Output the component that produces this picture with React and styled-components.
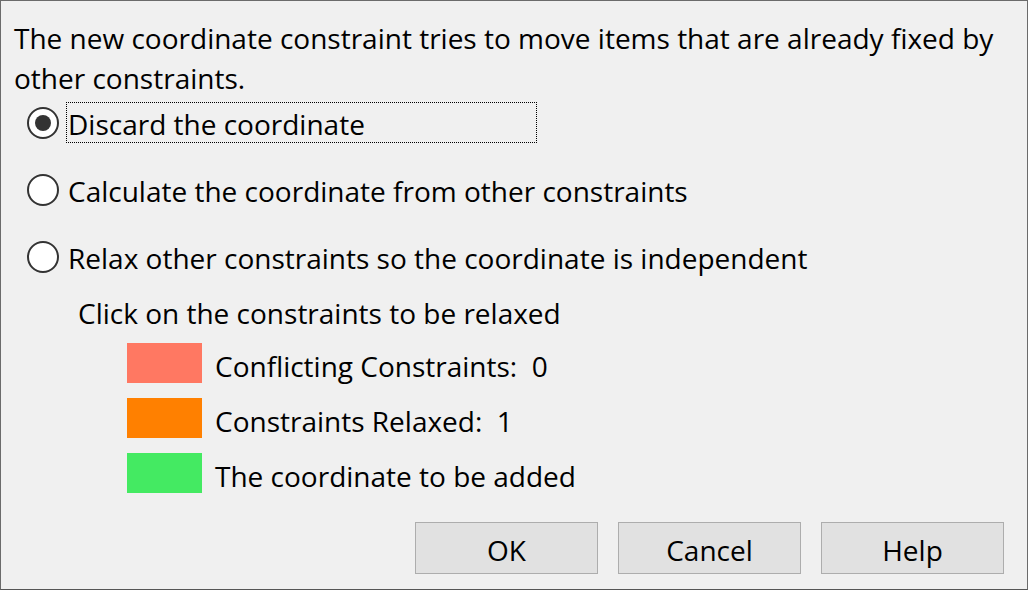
import styled, { createGlobalStyle } from 'styled-components';

const GlobalStyle = createGlobalStyle`
  body {
    margin: 0;
    background: #f0f0f0;
    font-family: "Open Sans", "Noto Sans", sans-serif;
    color: #000;
  }
`;

const Window = styled.div`
  width: 1028px;
  height: 590px;
  box-sizing: border-box;
  border: 1px solid #6b6b6b;
  border-bottom-color: #555;
  background: #f0f0f0;
  display: flex;
  flex-direction: column;
  padding: 17px 23px 15px 13px;
  font-size: 28px;
`;

const Message = styled.p`
  margin: 0;
  line-height: 40px;
  width: 1000px;
`;

const Options = styled.div`
  display: flex;
  flex-direction: column;
  gap: 26px;
  margin-top: 4px;
  padding-left: 13px;
`;

const OptionRow = styled.label`
  display: flex;
  align-items: center;
  height: 41px;
  gap: 7px;
`;

const Radio = styled.span`
  width: 32px;
  height: 32px;
  box-sizing: border-box;
  border-radius: 50%;
  border: 2px solid #333;
  background: #fff;
  display: flex;
  align-items: center;
  justify-content: center;

  &::after {
    content: '';
    width: 16px;
    height: 16px;
    border-radius: 50%;
    background: ${(p) => (p.checked ? '#333' : 'transparent')};
  }
`;

const OptionText = styled.span`
  box-sizing: border-box;
  min-width: 471px;
  height: 41px;
  line-height: 39px;
  padding: 2px 0 0 1px;
  border: 1px dotted ${(p) => (p.focused ? '#000' : 'transparent')};
  white-space: nowrap;
`;

const Hint = styled.div`
  margin: 16px 0 0 64px;
  line-height: 40px;
`;

const Legend = styled.div`
  display: flex;
  flex-direction: column;
  gap: 15px;
  margin: 10px 0 0 113px;
`;

const LegendRow = styled.div`
  display: flex;
  align-items: center;
  gap: 13px;
  height: 40px;
`;

const Swatch = styled.span`
  width: 75px;
  height: 40px;
  background: ${(p) => p.color};
`;

const LegendText = styled.span`
  line-height: 40px;
  padding-top: 5px;
  white-space: pre;
`;

const ButtonBar = styled.div`
  margin-top: auto;
  display: flex;
  justify-content: flex-end;
  gap: 20px;
`;

const Button = styled.button`
  width: 183px;
  height: 52px;
  border: 1px solid #adadad;
  background: #e1e1e1;
  font-family: inherit;
  font-size: 28px;
  color: #000;
  padding: 3px 0 0;
`;

const options = [
  { label: 'Discard the coordinate', checked: true },
  { label: 'Calculate the coordinate from other constraints' },
  { label: 'Relax other constraints so the coordinate is independent' },
];

const legend = [
  { color: '#ff7862', text: 'Conflicting Constraints:  0' },
  { color: '#ff8000', text: 'Constraints Relaxed:  1' },
  { color: '#44ea62', text: 'The coordinate to be added' },
];

export default function App() {
  return (
    <>
      <GlobalStyle />
      <Window>
        <Message>
          The new coordinate constraint tries to move items that are already fixed by other constraints.
        </Message>
        <Options>
          {options.map((o) => (
            <OptionRow key={o.label}>
              <Radio checked={o.checked} />
              <OptionText focused={o.checked}>{o.label}</OptionText>
            </OptionRow>
          ))}
        </Options>
        <Hint>Click on the constraints to be relaxed</Hint>
        <Legend>
          {legend.map((l) => (
            <LegendRow key={l.text}>
              <Swatch color={l.color} />
              <LegendText>{l.text}</LegendText>
            </LegendRow>
          ))}
        </Legend>
        <ButtonBar>
          <Button>OK</Button>
          <Button>Cancel</Button>
          <Button>Help</Button>
        </ButtonBar>
      </Window>
    </>
  );
}
